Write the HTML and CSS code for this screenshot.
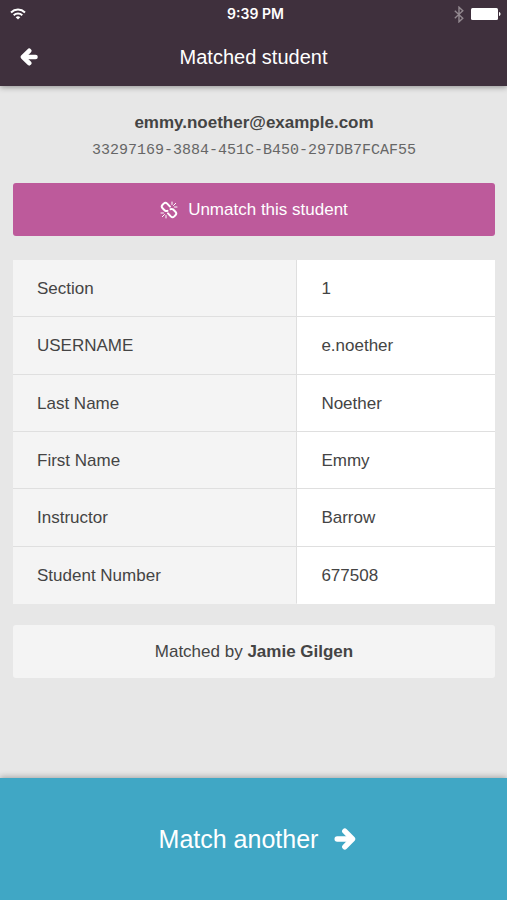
FILE: index.html
```html
<!DOCTYPE html>
<html lang="en">
<head>
    <meta charset="UTF-8">
    <meta name="viewport" content="width=device-width, initial-scale=1.0">
    <title>Matched student</title>
    <link rel="stylesheet" href="styles.css">
</head>
<body>
    <header class="header">
        <!-- Status bar -->
        <div class="status">
            <svg class="wifi" width="16" height="12" viewBox="0 0 16 12" fill="none" stroke="#fff" stroke-width="2">
                <path d="M1 4.4a10.2 10.2 0 0 1 14 0"/>
                <path d="M3.7 7.2a6.3 6.3 0 0 1 8.6 0"/>
                <path d="M8 11.6L5.7 9.3a3.3 3.3 0 0 1 4.6 0z" fill="#fff" stroke="none"/>
            </svg>
            <span class="time">9:39 PM</span>
            <div class="status-right">
                <svg width="10" height="17" viewBox="0 0 10 17" fill="none" stroke="#92888f" stroke-width="1.4">
                    <path d="M.8 4.8l8 7.4L5 15.8V1.2l3.8 3.6-8 7.4"/>
                </svg>
                <svg width="30" height="12" viewBox="0 0 30 12" fill="#fff">
                    <rect width="27" height="12" rx="1.5"/>
                    <path d="M28 4c2 .3 2 3.700 0 4z"/>
                </svg>
            </div>
        </div>

        <nav class="navbar">
            <button class="back" type="button" aria-label="Back">
                <svg width="18" height="18" viewBox="0 0 18 18" fill="none" stroke="#fff" stroke-width="4.600" stroke-linecap="round" stroke-linejoin="round">
                    <path d="M9.200 2.800L3 9l6.200 6.200"/>
                    <path d="M4 9h11.500"/>
                </svg>
            </button>
            <h1>Matched student</h1>
        </nav>
    </header>

    <main class="content">
        <div class="student">
            <p class="email">emmy.noether@example.com</p>
            <p class="uuid">33297169-3884-451C-B450-297DB7FCAF55</p>
        </div>

        <button class="unmatch" type="button">
            <!-- Broken link -->
            <svg width="18" height="18" viewBox="0 0 18 18" fill="none" stroke="#fff" stroke-linecap="round">
                <g stroke-width="2">
                    <path d="M10 5.600L7.200 2.600a2.500 2.500 0 0 0-3.500 0l-1.100 1.100a2.500 2.500 0 0 0 0 3.500l2.400 2.400q1.200.8 2.400.2"/>
                    <path d="M8 12.400l2.800 3a2.500 2.500 0 0 0 3.500 0l1.100-1.100a2.500 2.500 0 0 0 0-3.500l-2.400-2.400q-1.200-.8-2.400-.2"/>
                </g>
                <g stroke-width="1">
                    <path d="M12 3.500V1M13.500 4.500l2.200-2.200M14.500 6H17"/>
                    <path d="M6 14.500V17M4.500 13.500l-2.200 2.200M3.500 12H1"/>
                </g>
            </svg>
            <span>Unmatch this student</span>
        </button>

        <table class="details">
            <tr>
                <th scope="row">Section</th>
                <td>1</td>
            </tr>
            <tr>
                <th scope="row">USERNAME</th>
                <td>e.noether</td>
            </tr>
            <tr>
                <th scope="row">Last Name</th>
                <td>Noether</td>
            </tr>
            <tr>
                <th scope="row">First Name</th>
                <td>Emmy</td>
            </tr>
            <tr>
                <th scope="row">Instructor</th>
                <td>Barrow</td>
            </tr>
            <tr>
                <th scope="row">Student Number</th>
                <td>677508</td>
            </tr>
        </table>

        <p class="matched-by">Matched by <strong>Jamie Gilgen</strong></p>
    </main>

    <button class="match-another" type="button">
        <span>Match another</span>
        <svg width="22" height="22" viewBox="0 0 22 22" fill="none" stroke="#fff" stroke-width="5.400" stroke-linecap="round" stroke-linejoin="round">
            <path d="M10.800 3.200L18.500 11l-7.700 7.800"/>
            <path d="M3.200 11H17"/>
        </svg>
    </button>
</body>
</html>
```

FILE: styles.css
```css
* {
    box-sizing: border-box;
}

body {
    font-family: "Liberation Sans", Arial, sans-serif;
    font-size: 17px;
    line-height: 20px;
    color: #444;
    background-color: #e7e7e7;
    margin: 0;
    min-height: 100vh;
    display: flex;
    flex-direction: column;
}

p,
h1 {
    margin: 0;
}

button {
    font-family: inherit;
    color: #fff;
    border: none;
    cursor: pointer;
    display: flex;
    justify-content: center;
    align-items: center;
}

.header {
    background-color: #3f303d;
    color: #fff;
    box-shadow: 0 1px 6px rgba(0, 0, 0, 0.4);
}

.status {
    display: grid;
    grid-template-columns: 1fr auto 1fr;
    align-items: center;
    height: 28px;
    padding: 0 6px 0 10px;
}

.time {
    font-family: Inter, sans-serif;
    font-size: 14px;
    font-weight: 600;
}

.status-right {
    display: flex;
    justify-content: flex-end;
    align-items: center;
    gap: 7px;
}

.navbar {
    display: grid;
    grid-template-columns: 48px 1fr 48px;
    align-items: center;
    height: 58px;
}

.navbar h1 {
    font-size: 20px;
    font-weight: normal;
    text-align: center;
}

.back {
    background: none;
    height: 48px;
    padding: 0 0 0 10px;
}

.content {
    flex: 1;
    display: flex;
    flex-direction: column;
    padding: 27px 12px 26px 13px;
}

.student {
    text-align: center;
    margin-bottom: 22px;
}

.email {
    font-weight: bold;
    margin-bottom: 8px;
}

.uuid {
    font-family: "Liberation Mono", "Courier New", monospace;
    font-size: 15px;
    color: #666;
}

.unmatch {
    gap: 10px;
    height: 53px;
    padding: 0;
    font-size: 17px;
    background-color: #bd5a9b;
    border-radius: 3px;
    margin-bottom: 24px;
}

.details {
    width: 100%;
    height: 344px;
    table-layout: fixed;
    border-collapse: separate;
    border-spacing: 0;
    margin-bottom: 21px;
}

.details th,
.details td {
    padding: 2px 24px 0;
    text-align: left;
    font-weight: normal;
    border-bottom: 1px solid #dfdfdf;
}

.details th {
    width: 59%;
    background-color: #f4f4f4;
    border-right: 1px solid #dfdfdf;
}

.details td {
    background-color: #fff;
}

.details tr:last-child th,
.details tr:last-child td {
    border-bottom-color: transparent;
}

.matched-by {
    padding: 17px 16px 16px;
    text-align: center;
    background-color: #f4f4f4;
    border-radius: 3px;
}

.match-another {
    gap: 16px;
    height: 122px;
    padding: 0 0 0 8px;
    font-size: 25px;
    background-color: #40a7c5;
    box-shadow: 0 -1px 6px rgba(0, 0, 0, 0.3);
}
```
